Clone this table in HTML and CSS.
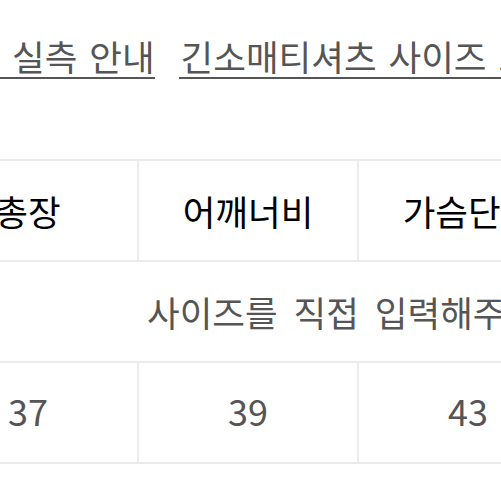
FILE: index.html
```html
<!DOCTYPE html>
<html lang="ko">
<head>
<meta charset="utf-8">
<link rel="stylesheet" href="styles.css">
</head>
<body>
<div class="page">
  <div class="links">
    <span class="link first">실측 안내</span>
    <span class="link">긴소매티셔츠 사이즈 표</span>
  </div>
  <div class="size-table">
    <div class="cell head">총장</div>
    <div class="cell head">어깨너비</div>
    <div class="cell head">가슴단면</div>
    <div class="cell head">소매길이</div>
    <div class="cell note">사이즈를 직접 입력해주세요</div>
    <div class="cell num">37</div>
    <div class="cell num">39</div>
    <div class="cell num">43</div>
    <div class="cell num">60</div>
  </div>
</div>
</body>
</html>
```
FILE: styles.css
```css
html, body {
  margin: 0;
  padding: 0;
  background: #fff;
}
.page {
  width: 501px;
  height: 501px;
  overflow: hidden;
  font-family: "Noto Sans CJK KR", sans-serif;
}
.links {
  display: flex;
  gap: 24px;
  white-space: nowrap;
  padding-top: 35px;
}
.link {
  font-size: 35.5px;
  line-height: 42px;
  color: #555;
  border-bottom: 2px solid #555;
  padding-left: 2px;
  word-spacing: 2px;
}
.link.first {
  padding-left: 12px;
  word-spacing: 2px;
}
.size-table {
  margin-top: 80px;
  margin-left: -81px;
  display: grid;
  grid-template-columns: repeat(4, 220px);
  grid-auto-rows: 101px;
  border-top: 2px solid #ebebeb;
}
.cell {
  border-right: 2px solid #ebebeb;
  border-bottom: 2px solid #ebebeb;
  display: flex;
  align-items: center;
  justify-content: center;
  white-space: nowrap;
}
.head {
  font-size: 35.5px;
  font-weight: 400;
  color: #000;
}
.note {
  grid-column: 1 / -1;
  justify-content: flex-start;
  padding-left: 228px;
  font-size: 35.5px;
  color: #555;
  word-spacing: 6px;
}
.num {
  font-size: 36px;
  color: #555;
  padding-bottom: 5px;
}
```
